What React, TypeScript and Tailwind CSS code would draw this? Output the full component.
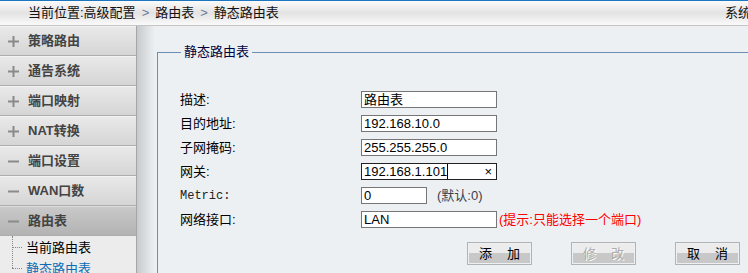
import React from "react";

const menu = [
  { label: "策略路由", open: false },
  { label: "通告系统", open: false },
  { label: "端口映射", open: false },
  { label: "NAT转换", open: false },
  { label: "端口设置", open: true },
  { label: "WAN口数", open: true },
  { label: "路由表", open: true, active: true },
];

const fields = [
  { label: "描述:", value: "路由表" },
  { label: "目的地址:", value: "192.168.10.0" },
  { label: "子网掩码:", value: "255.255.255.0" },
];

const Icon: React.FC<{ open: boolean }> = ({ open }) => (
  <svg width="11" height="11" viewBox="0 0 11 11" className="shrink-0">
    <rect x="0" y="4.5" width="11" height="2" fill="#8a8a8a" />
    {!open && <rect x="4.5" y="0" width="2" height="11" fill="#8a8a8a" />}
  </svg>
);

const Btn: React.FC<{ a: string; b: string; disabled?: boolean }> = ({ a, b, disabled }) => (
  <div className="w-[65px] h-[23px] border border-[#b3b3b3] p-px flex">
    <div
      className={`flex-1 flex items-center justify-between px-[10px] bg-[linear-gradient(#ececec_0%,#ececec_45%,#c8c8c8_45%,#c8c8c8_100%)] ${
        disabled ? "text-[#ababab] [text-shadow:1px_1px_0_#ffffff]" : "text-black"
      }`}
    >
      <span>{a}</span>
      <span>{b}</span>
    </div>
  </div>
);

export default function App() {
  return (
    <div className="w-[748px] h-[273px] overflow-hidden bg-[#edf0f3] text-[13px] font-['Liberation_Sans','Noto_Sans_CJK_SC',sans-serif]">
      {/* top bar */}
      <div className="h-[26px] border-t border-t-[#1d77c0] border-b border-b-[#c4c4c4] bg-[linear-gradient(#fbfbfb,#e3e3e3_50%,#fafafa)] flex items-center overflow-hidden whitespace-nowrap">
        <div className="w-[725px] shrink-0 pl-[28px] text-[#111]">
          当前位置:高级配置
          <span className="text-[#6b7d96] mx-[6px]">&gt;</span>
          路由表
          <span className="text-[#6b7d96] mx-[6px]">&gt;</span>
          静态路由表
        </div>
        <span className="shrink-0 text-[#111]">系统管理</span>
      </div>

      <div className="flex h-[247px]">
        {/* sidebar */}
        <div className="w-[137px] shrink-0 border-r border-[#a6a6a6] bg-[#ececec] flex flex-col">
          {menu.map((m) => (
            <div
              key={m.label}
              className={`h-[30px] shrink-0 border-b border-[#adadad] flex items-center gap-[6px] pl-[8px] font-bold text-[#444] ${
                m.active
                  ? "bg-[linear-gradient(#c9c9c9,#b3b3b3)] border-t border-t-[#dcdcdc]"
                  : "bg-[linear-gradient(#e9e9e9,#d5d5d5)] border-t border-t-[#f3f3f3]"
              }`}
            >
              <Icon open={m.open} />
              <span className="ml-[3px]">{m.label}</span>
            </div>
          ))}
          <div className="relative pl-[26px] pt-[1px]">
            <div className="absolute left-[12px] top-0 h-[32px] border-l border-dotted border-[#888]" />
            <div className="h-[21px] flex items-center relative">
              <div className="absolute left-[-14px] top-[10px] w-[10px] border-t border-dotted border-[#888]" />
              当前路由表
            </div>
            <div className="h-[21px] flex items-center relative text-[#0b6db6]">
              <div className="absolute left-[-14px] top-[10px] w-[10px] border-t border-dotted border-[#888]" />
              静态路由表
            </div>
          </div>
        </div>

        {/* shading strip */}
        <div className="w-[18px] shrink-0 bg-[linear-gradient(to_right,#c7c9cb,#dfe2e5_60%,#edf0f3)]" />

        {/* content */}
        <div className="flex-1 min-w-0 pl-[2px]">
          <fieldset className="mt-[18px] w-[620px] border border-[#6e8db3] pb-[20px]">
            <legend className="ml-[23px] px-[3px] leading-[16px] text-[#000040]">静态路由表</legend>
            <div className="pt-[31px] pl-[22px] flex flex-col gap-[7px]">
              {fields.map((f) => (
                <div key={f.label} className="flex items-center h-[17px]">
                  <span className="w-[181px] shrink-0">{f.label}</span>
                  <div className="w-[136px] h-[17px] border border-[#767676] bg-white pl-[2px] leading-[15px]">
                    {f.value}
                  </div>
                </div>
              ))}
              <div className="flex items-center h-[17px]">
                <span className="w-[181px] shrink-0">网关:</span>
                <div className="w-[136px] h-[17px] border border-[#222] bg-white pl-[2px] leading-[15px] flex items-center">
                  <span>192.168.1.101</span>
                  <span className="w-px h-[15px] bg-black" />
                  <span className="ml-auto mr-[4px] text-[13px]">×</span>
                </div>
              </div>
              <div className="flex items-center h-[17px]">
                <span className="w-[181px] shrink-0 text-[12px] text-[#222] font-['Liberation_Mono',monospace]">Metric:</span>
                <div className="w-[66px] h-[17px] border border-[#767676] bg-white pl-[2px] leading-[15px]">0</div>
                <span className="ml-[10px] text-[#3b3f4a]">(默认:0)</span>
              </div>
              <div className="flex items-center h-[17px]">
                <span className="w-[181px] shrink-0">网络接口:</span>
                <div className="w-[136px] h-[17px] border border-[#767676] bg-white pl-[2px] leading-[15px]">LAN</div>
                <span className="ml-[2px] text-[#ff0000]">(提示:只能选择一个端口)</span>
              </div>
            </div>
            <div className="flex gap-[39px] pl-[309px] mt-[14px]">
              <Btn a="添" b="加" />
              <Btn a="修" b="改" disabled />
              <Btn a="取" b="消" />
            </div>
          </fieldset>
        </div>
      </div>
    </div>
  );
}
